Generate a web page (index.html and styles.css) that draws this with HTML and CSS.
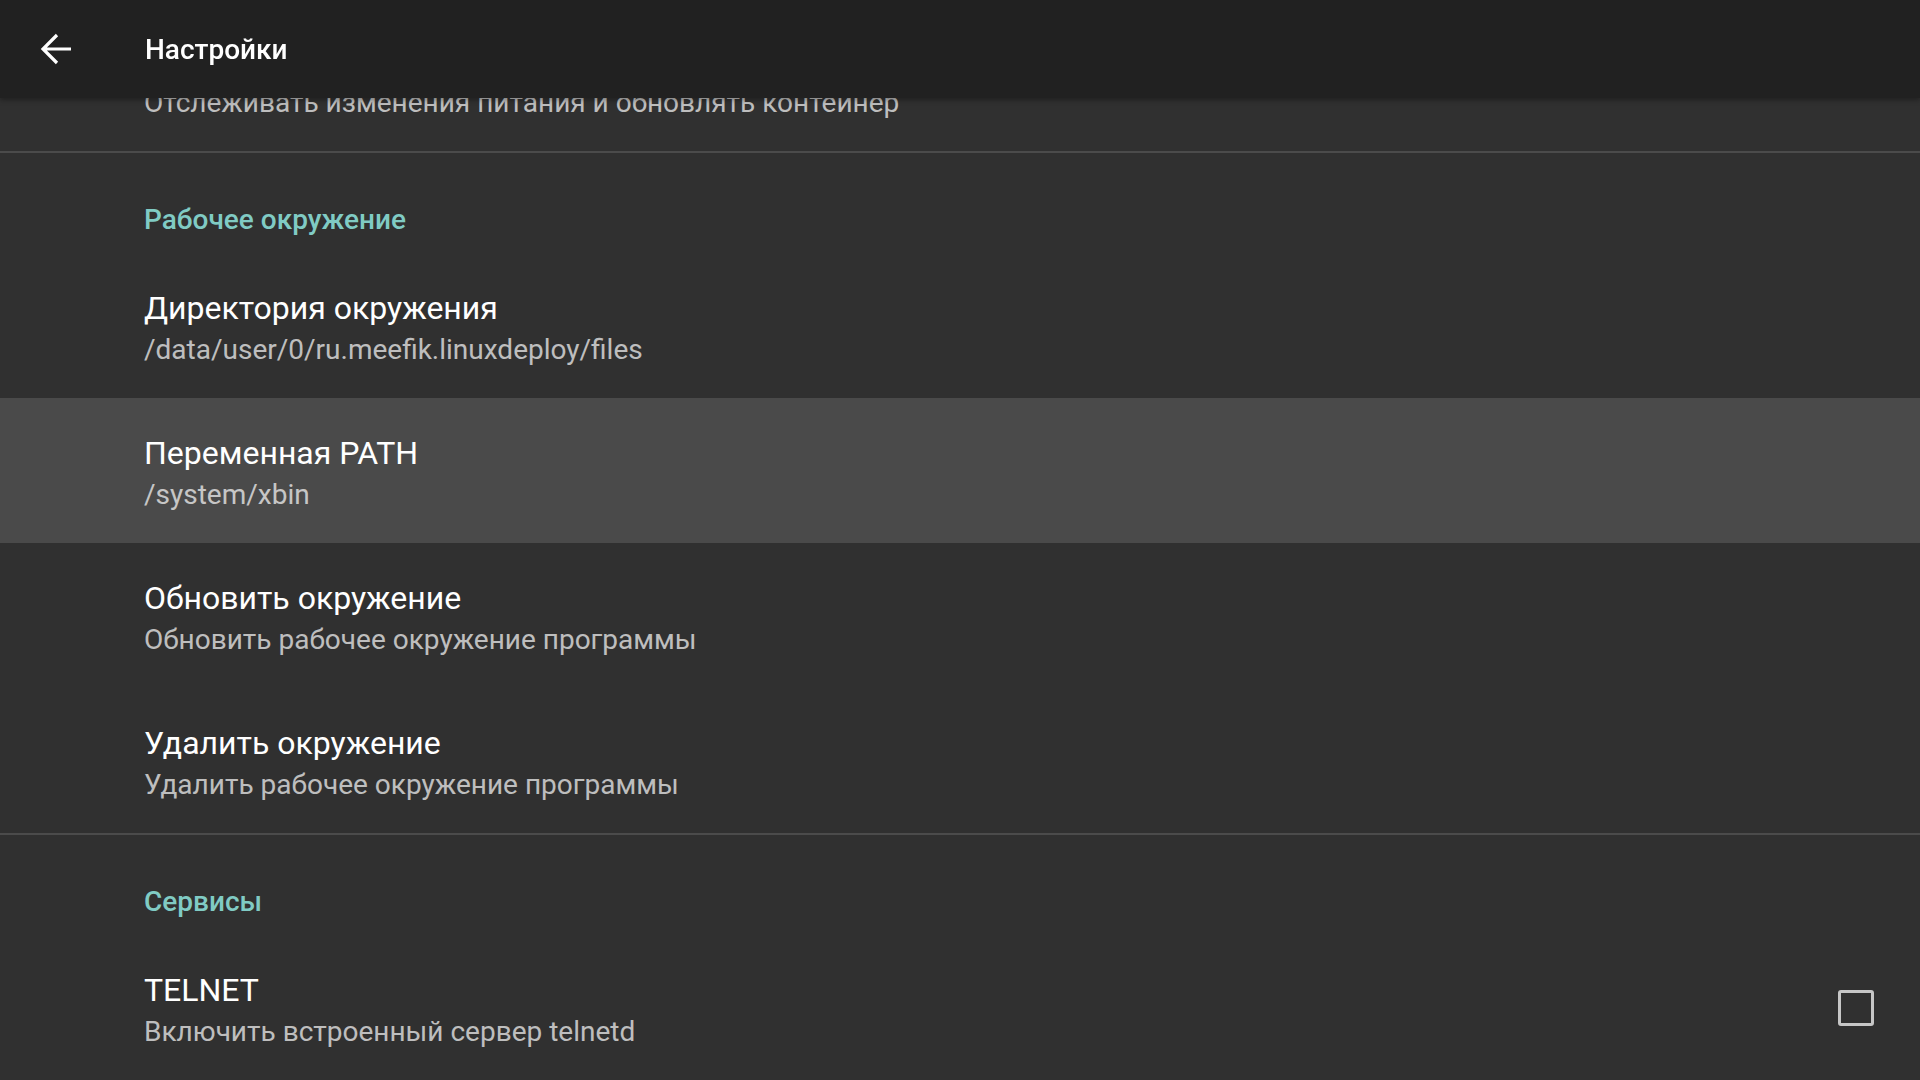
FILE: index.html
```html
<!DOCTYPE html>
<html lang="ru">
  <head>
    <meta charset="UTF-8" />
    <meta name="viewport" content="width=device-width, initial-scale=1.0" />
    <title>Настройки</title>
    <link rel="stylesheet" href="styles.css">
  </head>
  <body>
    <header class="toolbar">
      <svg class="back" width="32" height="32" viewBox="0 0 32 32">
        <path d="M31 16H3M17 2L3 16l14 14" fill="none" stroke="#fff" stroke-width="3.2" />
      </svg>
      <h1 class="toolbar-title">Настройки</h1>
    </header>

    <main class="prefs">
      <div class="pref">
        <div class="pref-text">
          <div class="pref-title">Отслеживать питание</div>
          <div class="pref-summary">Отслеживать изменения питания и обновлять контейнер</div>
        </div>
      </div>

      <div class="divider"></div>

      <div class="category">Рабочее окружение</div>
      <div class="pref">
        <div class="pref-text">
          <div class="pref-title">Директория окружения</div>
          <div class="pref-summary">/data/user/0/ru.meefik.linuxdeploy/files</div>
        </div>
      </div>
      <div class="pref pressed">
        <div class="pref-text">
          <div class="pref-title">Переменная PATH</div>
          <div class="pref-summary">/system/xbin</div>
        </div>
      </div>
      <div class="pref">
        <div class="pref-text">
          <div class="pref-title">Обновить окружение</div>
          <div class="pref-summary">Обновить рабочее окружение программы</div>
        </div>
      </div>
      <div class="pref">
        <div class="pref-text">
          <div class="pref-title">Удалить окружение</div>
          <div class="pref-summary">Удалить рабочее окружение программы</div>
        </div>
      </div>

      <div class="divider"></div>

      <div class="category">Сервисы</div>
      <div class="pref">
        <div class="pref-text">
          <div class="pref-title">TELNET</div>
          <div class="pref-summary">Включить встроенный сервер telnetd</div>
        </div>
        <span class="checkbox"></span>
      </div>
    </main>
  </body>
</html>
```

FILE: styles.css
```css
html, body {
  margin: 0;
  height: 100%;
}
body {
  background-color: #303030;
  font-family: Roboto, "Noto Sans", sans-serif;
  color: #fff;
  overflow: hidden;
}

/* app bar sits over the scrolled list */
.toolbar {
  position: fixed;
  top: 0;
  left: 0;
  right: 0;
  z-index: 2;
  height: 98px;
  display: flex;
  align-items: center;
  padding-left: 40px;
  background-color: #212121;
  box-shadow: 0 2px 5px rgba(0, 0, 0, 0.35);
}
.toolbar .back {
  display: block;
  flex: none;
}
.toolbar-title {
  margin: 2px 0 0 73px;
  font-size: 28px;
  font-weight: 500;
  line-height: 32px;
}

/* list is scrolled a little, first row hides under the bar */
.prefs {
  margin-top: 6px;
}
.divider {
  height: 2px;
  background-color: #4b4b4b;
}
.category {
  height: 100px;
  box-sizing: border-box;
  padding: 51px 0 0 144px;
  font-size: 28px;
  font-weight: 500;
  line-height: 32px;
  color: #80cbc4;
}
.pref {
  height: 145px;
  display: flex;
  align-items: center;
  padding: 0 46px 0 144px;
}
.pref.pressed {
  background-color: #4a4a4a;
}
.pref-text {
  flex: 1;
  padding-top: 2px;
}
.pref-title {
  font-size: 32px;
  line-height: 40px;
  color: #fff;
}
.pref-summary {
  margin: 3px 0 -3px;
  font-size: 28px;
  line-height: 38px;
  color: rgba(255, 255, 255, 0.7);
}
.checkbox {
  width: 36px;
  height: 36px;
  box-sizing: border-box;
  border: 3px solid #c6c6c6;
  border-radius: 3px;
  flex: none;
}
```
